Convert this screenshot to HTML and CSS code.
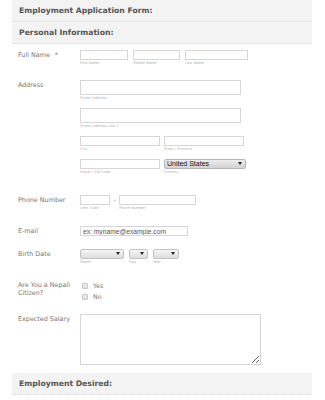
FILE: index.html
```html
<!DOCTYPE html>
<html lang="en">
<head>
    <meta charset="UTF-8">
    <meta name="viewport" content="width=device-width, initial-scale=1.0">
    <title>Employment Application Form</title>
    <link rel="stylesheet" href="styles.css">
</head>
<body>

<div class="form">
    <div class="section-head first">Employment Application Form:</div>
    <div class="section-head">Personal Information:</div>

    <div class="row row-name">
        <div class="row-label">Full Name<span class="req">*</span></div>
        <div class="row-fields">
            <div class="line">
                <div class="field"><input type="text" class="in-first"><span class="sub">First Name</span></div>
                <div class="field"><input type="text" class="in-middle"><span class="sub">Middle Name</span></div>
                <div class="field"><input type="text" class="in-last"><span class="sub">Last Name</span></div>
            </div>
        </div>
    </div>

    <div class="row row-address">
        <div class="row-label">Address</div>
        <div class="row-fields">
            <div class="field"><input type="text" class="in-street"><span class="sub">Street Address</span></div>
            <div class="field gap-top"><input type="text" class="in-street"><span class="sub">Street Address Line 2</span></div>
            <div class="line gap-top">
                <div class="field"><input type="text" class="in-half"><span class="sub">City</span></div>
                <div class="field"><input type="text" class="in-half"><span class="sub">State / Province</span></div>
            </div>
            <div class="line gap-top">
                <div class="field"><input type="text" class="in-half"><span class="sub">Postal / Zip Code</span></div>
                <div class="field">
                    <span class="select-wrap country"><select><option>United States</option></select></span>
                    <span class="sub">Country</span>
                </div>
            </div>
        </div>
    </div>

    <div class="row row-phone">
        <div class="row-label">Phone Number</div>
        <div class="row-fields">
            <div class="line">
                <div class="field"><input type="text" class="in-area"><span class="sub">Area Code</span></div>
                <span class="dash">-</span>
                <div class="field"><input type="text" class="in-phone"><span class="sub">Phone Number</span></div>
            </div>
        </div>
    </div>

    <div class="row row-email">
        <div class="row-label">E-mail</div>
        <div class="row-fields">
            <input type="text" class="in-email" placeholder="ex: myname@example.com">
        </div>
    </div>

    <div class="row row-birth">
        <div class="row-label">Birth Date</div>
        <div class="row-fields">
            <div class="line">
                <div class="field"><span class="select-wrap month"><select><option></option></select></span><span class="sub">Month</span></div>
                <div class="field"><span class="select-wrap day"><select><option></option></select></span><span class="sub">Day</span></div>
                <div class="field"><span class="select-wrap year"><select><option></option></select></span><span class="sub">Year</span></div>
            </div>
        </div>
    </div>

    <div class="row row-citizen">
        <div class="row-label">Are You a Nepali Citizen?</div>
        <div class="row-fields">
            <label class="option"><input type="checkbox"> Yes</label>
            <label class="option"><input type="checkbox"> No</label>
        </div>
    </div>

    <div class="row row-salary">
        <div class="row-label">Expected Salary</div>
        <div class="row-fields">
            <textarea class="in-salary"></textarea>
        </div>
    </div>

    <div class="section-head last">Employment Desired:</div>
</div>

</body>
</html>
```

FILE: styles.css
```css
body {
    margin: 0;
    background-color: #fff;
    font-family: "DejaVu Sans", Verdana, sans-serif;
}

.form {
    width: 300px;
    margin: 0 13px 0 12px;
}

.section-head {
    background-color: #f3f3f3;
    height: 21px;
    line-height: 21px;
    padding-left: 7px;
    border-bottom: 1px dotted #dcdcdc;
    font-size: 7.7px;
    font-weight: bold;
    color: #555;
}

.section-head.last {
    margin-top: 8px;
}

.row {
    display: flex;
    padding-left: 6px;
}

.row-label {
    width: 62px;
    flex: none;
    padding-top: 1px;
    font-size: 6.4px;
    line-height: 8px;
    color: #777;
}

.req {
    margin-left: 5px;
    color: #777;
}

.row-fields {
    flex: 1;
}

.line {
    display: flex;
    gap: 4px;
}

.field {
    display: flex;
    flex-direction: column;
    align-items: flex-start;
}

.gap-top {
    margin-top: 7px;
}

.sub {
    font-size: 3.6px;
    line-height: 6px;
    height: 6px;
    color: #b0b0b0;
}

input[type="text"],
textarea {
    box-sizing: border-box;
    margin: 0;
    padding: 0 2px;
    height: 10px;
    border: 1px solid #d6d6d6;
    background-color: #fff;
    outline: none;
    display: block;
}

.row-name { margin-top: 6px; }
.row-address { margin-top: 14px; }
.row-phone { margin-top: 20px; }
.row-email { margin-top: 15px; }
.row-birth { margin-top: 13px; }
.row-citizen { margin-top: 15px; }
.row-salary { margin-top: 12px; }

.row-name .line { gap: 5px; }
.in-first { width: 48px; }
.in-middle { width: 47px; }
.in-last { width: 63px; }

input.in-street {
    width: 161px;
    height: 15px;
}

input.in-half {
    width: 80px;
}

.row-phone .line { gap: 0; }
.in-area { width: 30px; }
.in-phone { width: 77px; }

.dash {
    width: 9px;
    text-align: center;
    font-size: 6px;
    line-height: 10px;
    color: #777;
}

input.in-email {
    width: 108px;
    font-family: "Liberation Sans", Arial, sans-serif;
    font-size: 6.7px;
}

.in-email::placeholder {
    color: #555;
}

.select-wrap {
    position: relative;
    display: block;
}

.select-wrap select {
    -webkit-appearance: none;
    appearance: none;
    display: block;
    box-sizing: border-box;
    margin: 0;
    height: 10px;
    padding: 0 0 0 2px;
    border: 1px solid #c4c4c4;
    border-radius: 2px;
    background: linear-gradient(#f6f6f6, #dedede);
    font-family: "Liberation Sans", Arial, sans-serif;
    font-size: 7px;
    line-height: 8px;
    color: #111;
    outline: none;
}

.select-wrap::after {
    content: "";
    position: absolute;
    right: 4px;
    top: 3px;
    border-left: 2px solid transparent;
    border-right: 2px solid transparent;
    border-top: 3px solid #222;
}

.country select {
    width: 82px;
    border-color: #b5b5b5;
    background: linear-gradient(#ededed, #d2d2d2);
}

.month select { width: 44px; }
.day select { width: 19px; }
.year select { width: 26px; }

.row-birth .line { gap: 5px; }

.option {
    display: flex;
    align-items: center;
    height: 11px;
    font-size: 6.4px;
    color: #777;
}

.option input {
    -webkit-appearance: none;
    appearance: none;
    width: 6px;
    height: 6px;
    margin: 0 5px 0 2px;
    border: 1px solid #c8c8c8;
    border-radius: 1px;
    background: linear-gradient(#f0f0f0, #dcdcdc);
    box-sizing: border-box;
}

textarea.in-salary {
    width: 181px;
    height: 51px;
    resize: both;
}
```
